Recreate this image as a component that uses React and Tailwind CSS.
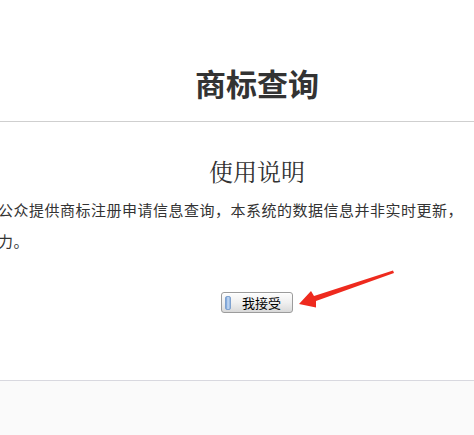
import React from 'react';

function AcceptButton() {
  return (
    <button
      type="button"
      className="flex items-center h-[21px] w-[72px] rounded-[3px] border border-[#9c9c9c] bg-gradient-to-b from-[#fdfdfd] via-[#f0f0f0] to-[#d9d9d9] pl-[3px] pr-1 shadow-[inset_0_1px_0_#ffffff]"
    >
      <span className="h-[14px] w-[6px] rounded-[2px] border border-[#7fa2cf] bg-gradient-to-r from-[#6e9bd6] via-[#c9dcf3] to-[#8fb3e2]" />
      <span className="flex-1 pl-[4px] text-center text-[13px] leading-none text-black">我接受</span>
    </button>
  );
}

function Arrow() {
  return (
    <svg className="absolute left-0 top-0 pointer-events-none" width="474" height="435" viewBox="0 0 474 435">
      <polygon
        points="393,270.5 314,296 311,291 299,304 316,307.5 316,301 394,273"
        fill="#ee2a1e"
      />
    </svg>
  );
}

function App() {
  return (
    <div
      className="relative w-[474px] h-[435px] overflow-hidden bg-white text-[#333]"
      style={{ fontFamily: '"Noto Sans CJK SC", "Noto Sans", sans-serif' }}
    >
      <div className="w-[514px] h-[122px] border-b border-[#cfcfcf] pt-[64px]">
        <h1 className="text-center text-[31px] leading-[38px] font-bold text-[#333]">商标查询</h1>
      </div>

      <div className="w-[514px] h-[259px] border-b border-[#d8d8df] pt-[33px]">
        <h2
          className="text-center text-[24px] leading-[32px] font-normal text-[#333]"
          style={{ fontFamily: '"Noto Serif CJK SC", "Noto Sans CJK SC", serif' }}
        >
          使用说明
        </h2>
        <div className="mt-[7px] -ml-[2px] whitespace-nowrap text-[15px] tracking-[0.5px] leading-[31px] text-[#333]">
          <p>公众提供商标注册申请信息查询，本系统的数据信息并非实时更新，</p>
          <p>力。</p>
        </div>
        <div className="mt-[36px] flex justify-center">
          <AcceptButton />
        </div>
      </div>

      <div className="h-[60px] bg-[#fafafa]" />

      <Arrow />
    </div>
  );
}

export default App;
